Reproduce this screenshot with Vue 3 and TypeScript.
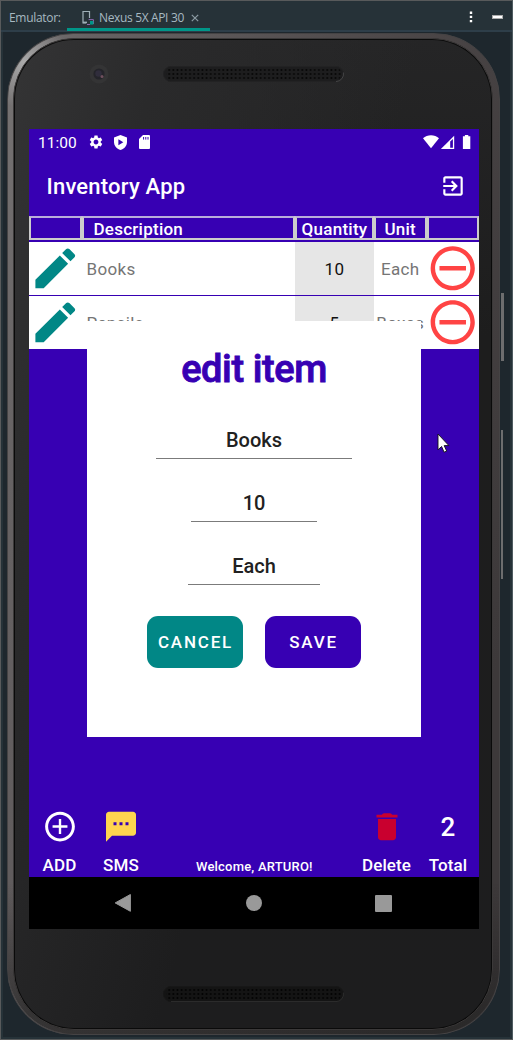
<script setup lang="ts">
interface Item {
  description: string
  quantity: number
  unit: string
}

const items: Item[] = [
  { description: 'Books', quantity: 10, unit: 'Each' },
  { description: 'Pencils', quantity: 5, unit: 'Boxes' },
]

const headings: string[] = ['', 'Description', 'Quantity', 'Unit', '']
const grilleRows: number[] = [4, 8, 12]
</script>

<template>
  <div class="window">
    <header class="toolbar">
      <span class="label">Emulator:</span>
      <div class="tab">
        <svg class="device" width="14" height="16" viewBox="0 0 14 16">
          <path d="M5 13H2V1.5H8.5V8" fill="none" stroke="#9fb0b8" stroke-width="1.2" />
          <path d="M2 12.4H6" stroke="#9fb0b8" stroke-width="1.6" />
          <path d="M7.6 9.6H12.4V14" fill="none" stroke="#8f6bb0" />
          <rect x="9" y="11" width="3.4" height="3.6" fill="#009688" />
          <path d="M6 14.5H9" stroke="#8f6bb0" />
        </svg>
        <span class="tab-name">Nexus 5X API 30</span>
        <svg class="close" width="8" height="8" viewBox="0 0 8 8"><path d="M.8.8 7.2 7.2M7.2.8.8 7.2" stroke="#8b9ba3" stroke-width="1.2" /></svg>
      </div>
      <div class="tools">
        <svg width="4" height="12" viewBox="0 0 4 12" fill="#fff"><path d="M.8.5h2.4v2.4H.8zM.8 4.7h2.4v2.4H.8zM.8 8.9h2.4v2.4H.8z" /></svg>
        <span class="minimise"></span>
      </div>
    </header>

    <main class="stage">
      <span class="side-button power"></span>
      <span class="side-button volume"></span>
      <div class="phone">
        <div class="rim">
          <div class="face">
            <div class="top-bezel">
              <svg class="camera" width="20" height="20" viewBox="0 0 20 20">
                <circle cx="10" cy="10" r="9.5" fill="#343435" />
                <circle cx="10" cy="10" r="5.6" fill="#24242a" />
                <circle cx="9.5" cy="9.5" r="3.2" fill="#302d3c" />
                <circle cx="13" cy="12.5" r="1.5" fill="#70505e" />
              </svg>
              <svg class="grille" width="181" height="16" viewBox="0 0 181 16">
                <defs>
                  <pattern id="holes-top" width="4.16" height="16" patternUnits="userSpaceOnUse">
                    <circle v-for="y in grilleRows" :key="y" cx="2" :cy="y" r="1" fill="#070707" />
                  </pattern>
                </defs>
                <rect x=".5" y=".5" width="180" height="15" rx="7.5" fill="#1d1d1e" stroke="#222223" />
                <rect x="3" y="1" width="175" height="14" rx="6" fill="url(#holes-top)" />
                <path d="M173 15.5a7.5 7.5 0 0 0 7.4-9" fill="none" stroke="#4a4a4b" stroke-width=".9" />
              </svg>
            </div>

            <section class="screen">
              <div class="status">
                <span class="clock">11:00</span>
                <svg class="s-gear" width="16" height="16" viewBox="0 0 24 24" fill="#fff"><path d="M19.14 12.94c.04-.3.06-.61.06-.94 0-.32-.02-.64-.07-.94l2.03-1.58c.18-.14.23-.41.12-.61l-1.92-3.32c-.12-.22-.37-.29-.59-.22l-2.39.96c-.5-.38-1.03-.7-1.62-.94l-.36-2.54c-.04-.24-.24-.41-.48-.41h-3.84c-.24 0-.43.17-.47.41l-.36 2.54c-.59.24-1.13.57-1.62.94l-2.39-.96c-.22-.08-.47 0-.59.22L2.74 8.87c-.12.21-.08.47.12.61l2.03 1.58c-.05.3-.09.63-.09.94s.02.64.07.94l-2.03 1.58c-.18.14-.23.41-.12.61l1.92 3.32c.12.22.37.29.59.22l2.39-.96c.5.38 1.03.7 1.62.94l.36 2.54c.05.24.24.41.48.41h3.84c.24 0 .44-.17.47-.41l.36-2.54c.59-.24 1.13-.56 1.62-.94l2.39.96c.22.08.47 0 .59-.22l1.92-3.32c.12-.22.07-.47-.12-.61l-2.01-1.58zM12 15.6c-1.98 0-3.6-1.62-3.6-3.6s1.62-3.6 3.6-3.6 3.6 1.62 3.6 3.6-1.62 3.6-3.6 3.6z" /></svg>
                <svg class="s-shield" width="13" height="15" viewBox="0 0 13 15"><path d="M6.5 0 13 2.4V7c0 3.7-2.6 6.8-6.5 8C2.6 13.8 0 10.7 0 7V2.4z" fill="#fff" /><path d="M4.4 4.3v6L9.3 7.3z" fill="#3700b3" /></svg>
                <svg class="s-card" width="11" height="14" viewBox="0 0 11 14"><path d="M4 0h6q1 0 1 1v12q0 1-1 1H1q-1 0-1-1V4z" fill="#fff" /><path d="M4.6 2v2.6M6.8 2v2.6M9 2v2.6" stroke="#3700b3" stroke-width="1" /></svg>
                <svg class="s-radio" width="48" height="16" viewBox="0 0 48 16" fill="#fff">
                  <path d="M0 4.2C2.2 2.2 5 1.2 8 1.2s5.8 1 8 3L8 14.2z" />
                  <path d="M31.2 1.7V15H17.9z" />
                  <path d="M27.2 7.6 29.9 4.9V13.7H27.2z" fill="#3700b3" />
                  <path d="M39.9 2.2h2V1h3.4v1.2h2V15h-7.4z" />
                </svg>
              </div>

              <div class="app-bar">
                <h1>Inventory App</h1>
                <svg width="26" height="26" viewBox="0 0 24 24" fill="#fff"><path d="M10.09 15.59 11.5 17l5-5-5-5-1.41 1.41L12.67 11H3v2h9.67l-2.58 2.59zM19 3H5c-1.11 0-2 .9-2 2v4h2V5h14v14H5v-4H3v4c0 1.1.89 2 2 2h14c1.1 0 2-.9 2-2V5c0-1.1-.9-2-2-2z" /></svg>
              </div>

              <div class="headings columns">
                <span v-for="(heading, i) in headings" :key="i" :class="{ first: i === 1 }">{{ heading }}</span>
              </div>

              <div class="list">
                <div v-for="item in items" :key="item.description" class="row columns">
                  <svg width="53" height="53" viewBox="0.1 0.1 24 24" fill="#018786"><path d="M3 17.25V21h3.75L17.81 9.94l-3.75-3.75L3 17.25zM20.71 7.04c.39-.39.39-1.02 0-1.41l-2.34-2.34c-.39-.39-1.02-.39-1.41 0l-1.83 1.83 3.75 3.75 1.83-1.83z" /></svg>
                  <span class="description">{{ item.description }}</span>
                  <span class="quantity">{{ item.quantity }}</span>
                  <span class="unit">{{ item.unit }}</span>
                  <svg width="53" height="53" viewBox="0.35 0.1 24 24" fill="#ff4444"><path d="M6 11v2h12v-2H6zm6-9C6.48 2 2 6.48 2 12s4.48 10 10 10 10-4.48 10-10S17.52 2 12 2zm0 18c-4.41 0-8-3.59-8-8s3.59-8 8-8 8 3.59 8 8-3.59 8-8 8z" /></svg>
                </div>
              </div>

              <footer class="actions">
                <div class="action add">
                  <svg width="36" height="36" viewBox="-0.1 0.2 24.2 24.2" fill="#fff"><path d="M12.8 7h-1.6v4.2H7v1.6h4.2V17h1.6v-4.2H17v-1.6h-4.2V7zM12 2C6.48 2 2 6.48 2 12s4.48 10 10 10 10-4.48 10-10S17.52 2 12 2zm0 18c-4.41 0-8-3.59-8-8s3.59-8 8-8 8 3.59 8 8-3.59 8-8 8z" /></svg>
                  <span>ADD</span>
                </div>
                <div class="action sms">
                  <svg width="36" height="36" viewBox="0 0.2 24 24" fill="#ffd54f"><path d="M20 2H4c-1.1 0-1.99.9-1.99 2L2 22l4-4h14c1.1 0 2-.9 2-2V4c0-1.1-.9-2-2-2zM9 11H7V9h2v2zm4 0h-2V9h2v2zm4 0h-2V9h2v2z" /></svg>
                  <span>SMS</span>
                </div>
                <span class="welcome">Welcome, ARTURO!</span>
                <div class="action delete">
                  <svg width="36" height="36" viewBox="0 0.2 24 24" fill="#c9002f"><path d="M6 19c0 1.1.9 2 2 2h8c1.1 0 2-.9 2-2V6.8H6zM19 4h-3.500q-.6-1-1.500-1h-4q-.9 0-1.500 1H5v1.900h14z" /></svg>
                  <span>Delete</span>
                </div>
                <div class="action total">
                  <strong>{{ items.length }}</strong>
                  <span>Total</span>
                </div>
              </footer>

              <nav class="system-nav">
                <svg width="18" height="20" viewBox="0 0 18 20"><path d="M16.4 1.5v16.8L1.2 9.9z" fill="#999" stroke="#999" stroke-linejoin="round" /></svg>
                <span class="home"></span>
                <span class="recent"></span>
              </nav>

              <div class="dialog">
                <h2>edit item</h2>
                <div class="field name">{{ items[0].description }}</div>
                <div class="field amount">{{ items[0].quantity }}</div>
                <div class="field measure">{{ items[0].unit }}</div>
                <div class="buttons">
                  <button class="cancel">CANCEL</button>
                  <button class="save">SAVE</button>
                </div>
              </div>
            </section>

            <div class="bottom-bezel">
              <svg class="grille" width="181" height="16" viewBox="0 0 181 16">
                <defs>
                  <pattern id="holes-bottom" width="4.16" height="16" patternUnits="userSpaceOnUse">
                    <circle v-for="y in grilleRows" :key="y" cx="2" :cy="y" r="1" fill="#020202" />
                  </pattern>
                </defs>
                <rect x=".5" y=".5" width="180" height="15" rx="7.5" fill="#141414" stroke="#171717" />
                <rect x="3" y="1" width="175" height="14" rx="6" fill="url(#holes-bottom)" />
                <path d="M8 15.6H173a7.5 7.5 0 0 0 7.4-9" fill="none" stroke="#333" stroke-width=".8" />
              </svg>
            </div>
          </div>
        </div>
      </div>
      <svg class="cursor" width="13" height="21" viewBox="0 0 13 21"><path d="M1 1v15.8l3.6-3.3 2.5 5.7 2.6-1.1-2.5-5.5h4.7z" fill="#fff" stroke="#111" stroke-width=".9" /></svg>
    </main>
  </div>
</template>

<style>
body {
  background: #1e272d;
}
</style>

<style scoped>
* {
  box-sizing: border-box;
}
.window {
  width: 513px;
  height: 1040px;
  border: 1px solid #585a5b;
  border-right-color: #4e5b60;
  background: #263238;
  display: flex;
  flex-direction: column;
  overflow: hidden;
  font-family: Roboto, sans-serif;
}
.toolbar {
  height: 31px;
  flex: none;
  display: flex;
  align-items: stretch;
  border-bottom: 2px solid #2e3e49;
  font: 12px/33px 'Open Sans', 'Noto Sans', sans-serif;
  color: #a7b9c1;
}
.label {
  width: 66px;
  padding-left: 8px;
  letter-spacing: -0.3px;
}
.tab {
  width: 143px;
  height: 30px;
  border-bottom: 3px solid #009688;
  display: flex;
  align-items: center;
  padding-left: 14px;
  line-height: 33px;
}
.device {
  margin-top: 6px;
}
.tab-name {
  width: 88px;
  margin: 5px 6px 0 4px;
  white-space: nowrap;
  letter-spacing: -0.35px;
}
.close {
  flex: none;
  margin: 7px 0 0 -2px;
}
.tools {
  margin-left: auto;
  padding: 3px 9px 0 0;
  display: flex;
  align-items: center;
  gap: 19px;
}
.minimise {
  width: 11px;
  height: 4px;
  background: #fff;
  border: 0.5px solid #aaa;
}
.stage {
  position: relative;
  flex: 1;
  margin: 0 2px 2px;
  padding: 1px 0 0 4px;
  background: #1e272d;
}
.side-button {
  position: absolute;
  background: #6d6d6e;
  left: 498px;
}
.power {
  top: 261px;
  width: 3px;
  height: 68px;
}
.volume {
  top: 398px;
  width: 2px;
  height: 149px;
}
.phone {
  position: relative;
  width: 493px;
  height: 1002px;
  padding: 4px 6px 4px 5px;
  border: 1px solid #454344;
  border-radius: 66px;
  background: linear-gradient(100deg, #777474 0, #666263 12%, #514c4d 50%, #3d393a 90%);
}
.phone::before {
  content: '';
  position: absolute;
  inset: 0;
  border-radius: inherit;
  background: radial-gradient(circle at 16px 28px, #aaa 0, #aaa0 46px), linear-gradient(#0000 85%, #222a 98%);
}
.rim {
  position: relative;
  height: 100%;
  padding: 1px;
  border: 1px solid #3b3939;
  border-radius: 61px;
  background: #0a0a0a;
}
.face {
  height: 100%;
  padding: 0 12px 0 14px;
  border-radius: 59px;
  display: flex;
  flex-direction: column;
  background: linear-gradient(105deg, #343435 0, #2a2a2b 20%, #1c1c1c00 55%), linear-gradient(#252526 0, #1d1d1d 30%, #1d1d1e 100%);
}
.top-bezel {
  height: 89px;
  flex: none;
  display: flex;
  align-items: flex-start;
  padding: 24px 0 0 60px;
}
.top-bezel .grille {
  margin: 2px 0 0 54px;
}
.bottom-bezel {
  padding: 57px 0 0 134px;
}
.screen {
  position: relative;
  width: 450px;
  height: 800px;
  flex: none;
  display: flex;
  flex-direction: column;
  background: #3700b3;
  color: #fff;
  font-weight: 500;
}
.status {
  height: 30px;
  display: flex;
  align-items: flex-start;
  padding: 5px 8px 0 9px;
}
.clock {
  width: 50px;
  font-size: 15.5px;
  font-weight: 400;
  line-height: 19px;
}
.s-shield {
  margin: 1px 0 0 10px;
}
.s-card {
  margin: 1px 0 0 12px;
}
.s-radio {
  margin-left: auto;
}
.app-bar {
  height: 57px;
  display: flex;
  align-items: flex-start;
  justify-content: space-between;
  padding: 14px 13px 0 17px;
}
h1 {
  margin: 0 0 0 0.5px;
  font-size: 22px;
  line-height: 28px;
  font-weight: 500;
  letter-spacing: 0.2px;
}
.columns {
  display: grid;
  grid-template-columns: 52.5px 213.5px 79px 52.5px 52.5px;
}
.headings {
  height: 24px;
  font-size: 17px;
  line-height: 22px;
  text-align: center;
  letter-spacing: 0.25px;
}
.headings span {
  height: 24px;
  border: 2px solid #ccc;
  border-top-color: #b8addb;
}
.headings .first {
  text-align: left;
  padding-left: 10px;
}
.list {
  margin-top: 2px;
}
.row {
  height: 53px;
  background: #fff;
  color: #757575;
  font-size: 17px;
  font-weight: 450;
  line-height: 54px;
  letter-spacing: 0.35px;
}
.row > * {
  height: 53px;
}
.row + .row {
  margin-top: 1px;
}
.description {
  padding-left: 5px;
}
.quantity {
  background: #e6e6e6;
  color: #111;
  text-align: center;
}
.unit {
  display: flex;
  justify-content: center;
}
.actions {
  margin-top: auto;
  height: 68px;
  display: flex;
  align-items: flex-end;
  font-size: 17px;
}
.action {
  height: 68px;
  display: flex;
  flex-direction: column;
  align-items: center;
}
.action span {
  margin-top: 10px;
  line-height: 20px;
  letter-spacing: 0.1px;
}
.add {
  width: 61px;
}
.sms {
  width: 62px;
}
.welcome {
  flex: 1;
  padding: 0 0 2px 44px;
  font-size: 13px;
  line-height: 16px;
  letter-spacing: 0.2px;
}
.delete {
  width: 59px;
}
.delete svg {
  margin-left: 1px;
}
.total {
  width: 63px;
}
.action strong {
  height: 36px;
  margin-left: 1px;
  font-size: 26px;
  font-weight: 500;
  line-height: 37px;
}
.total span {
  padding-left: 1px;
}
.system-nav {
  height: 52px;
  background: #000;
  display: flex;
  align-items: center;
  padding-left: 85px;
}
.home {
  width: 16px;
  height: 16px;
  margin-left: 114px;
  border-radius: 50%;
  background: #999;
}
.recent {
  width: 17px;
  height: 17px;
  margin-left: 113px;
  border-radius: 1px;
  background: #999;
}
.dialog {
  position: absolute;
  left: 58px;
  top: 192px;
  width: 334px;
  height: 416px;
  display: flex;
  flex-direction: column;
  align-items: center;
  background: #fff;
  color: #212121;
}
h2 {
  margin: 24px 0 0;
  color: #3700b3;
  font-size: 38px;
  line-height: 48px;
  font-weight: 500;
  letter-spacing: -0.4px;
  -webkit-text-stroke: 0.9px #3700b3;
}
.field {
  font-size: 20px;
  line-height: 30px;
  text-align: center;
  border-bottom: 1px solid #7b7b7b;
}
.name {
  width: 196px;
  height: 34px;
  margin-top: 32px;
}
.amount {
  width: 126px;
  height: 34px;
  margin-top: 29px;
}
.measure {
  width: 132px;
  height: 34px;
  margin-top: 29px;
}
.buttons {
  display: flex;
  gap: 22px;
  margin-top: 31px;
}
button {
  width: 96px;
  height: 52px;
  padding: 0 0 0 1px;
  border: 0;
  border-radius: 11px;
  color: #fff;
  font: 500 17px/20px Roboto, sans-serif;
  letter-spacing: 1.8px;
}
.cancel {
  background: #018786;
}
.save {
  background: #3700b3;
}
.cursor {
  position: absolute;
  left: 434px;
  top: 401px;
}
</style>
